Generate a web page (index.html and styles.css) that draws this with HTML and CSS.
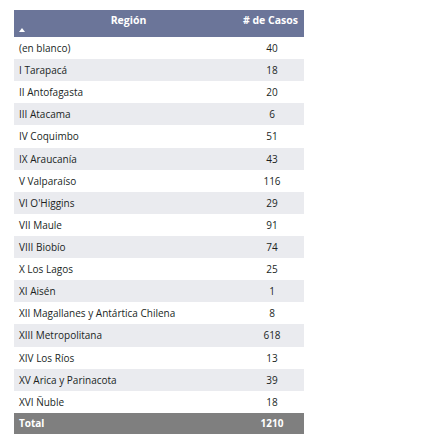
FILE: index.html
```html
<!DOCTYPE html>
<html lang="es">
<head>
<meta charset="utf-8">
<link rel="stylesheet" href="styles.css">
</head>
<body>
<div class="table">
  <div class="row head">
    <div class="c1"><span class="sort"></span>Región</div>
    <div class="c2">#&nbsp;de Casos</div>
  </div>
  <div class="row"><div class="c1">(en blanco)</div><div class="c2">40</div></div>
  <div class="row alt"><div class="c1">I Tarapacá</div><div class="c2">18</div></div>
  <div class="row"><div class="c1">II Antofagasta</div><div class="c2">20</div></div>
  <div class="row alt"><div class="c1">III Atacama</div><div class="c2">6</div></div>
  <div class="row"><div class="c1">IV Coquimbo</div><div class="c2">51</div></div>
  <div class="row alt"><div class="c1">IX Araucanía</div><div class="c2">43</div></div>
  <div class="row"><div class="c1">V Valparaíso</div><div class="c2">116</div></div>
  <div class="row alt"><div class="c1">VI O'Higgins</div><div class="c2">29</div></div>
  <div class="row"><div class="c1">VII Maule</div><div class="c2">91</div></div>
  <div class="row alt"><div class="c1">VIII Biobío</div><div class="c2">74</div></div>
  <div class="row"><div class="c1">X Los Lagos</div><div class="c2">25</div></div>
  <div class="row alt"><div class="c1">XI Aisén</div><div class="c2">1</div></div>
  <div class="row"><div class="c1">XII Magallanes y Antártica Chilena</div><div class="c2">8</div></div>
  <div class="row alt"><div class="c1">XIII Metropolitana</div><div class="c2">618</div></div>
  <div class="row"><div class="c1">XIV Los Ríos</div><div class="c2">13</div></div>
  <div class="row alt"><div class="c1">XV Arica y Parinacota</div><div class="c2">39</div></div>
  <div class="row"><div class="c1">XVI Ñuble</div><div class="c2">18</div></div>
  <div class="row total"><div class="c1">Total</div><div class="c2">1210</div></div>
</div>
</body>
</html>
```
FILE: styles.css
```css
html, body {
  margin: 0;
  padding: 0;
  background: #ffffff;
}
body {
  font-family: "Open Sans", "Noto Sans", sans-serif;
  font-size: 10px;
  color: #201f1e;
}
.table {
  margin: 10px 0 0 14px;
  width: 290px;
  display: flex;
  flex-direction: column;
}
.row {
  display: grid;
  grid-template-columns: 224px 66px;
  height: 22.12px;
  align-items: center;
  background: #ffffff;
}
.row.alt {
  background: #eaebef;
}
.c1 {
  padding-left: 5px;
  white-space: nowrap;
}
.c2 {
  text-align: center;
  padding-left: 2px;
}
.head {
  height: 27px;
  background: #6b7599;
  color: #ffffff;
  font-weight: 700;
  font-size: 10.5px;
  align-items: start;
  position: relative;
}
.head .c1 {
  text-align: center;
  padding-top: 3px;
}
.head .c2 {
  text-align: right;
  padding-right: 6px;
  padding-top: 3px;
}
.sort {
  position: absolute;
  left: 5px;
  top: 18px;
  width: 0;
  height: 0;
  border-left: 3.5px solid transparent;
  border-right: 3.5px solid transparent;
  border-bottom: 4px solid #ffffff;
}
.total {
  background: #7f7f7f;
  color: #ffffff;
  font-weight: 700;
  height: 21px;
}
```
